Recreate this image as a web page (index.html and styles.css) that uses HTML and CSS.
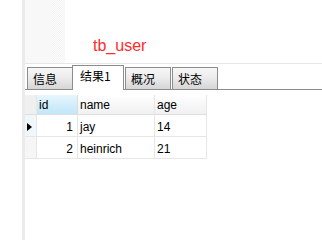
FILE: index.html
```html
<!DOCTYPE html>
<html>
<head>
<meta charset="utf-8">
<link rel="stylesheet" href="styles.css">
</head>
<body>
<div class="page">
  <div class="gutter"></div>
  <div class="strip"></div>
  <div class="main">
    <div class="top">
      <div class="pane1"></div>
      <div class="pane2"></div>
      <div class="title">tb_user</div>
    </div>
    <div class="sep"></div>
    <div class="tabbar">
      <div class="tab w1">信息</div>
      <div class="tab active">结果1</div>
      <div class="tab w3">概况</div>
      <div class="tab w4">状态</div>
    </div>
    <div class="content">
      <div class="grid">
        <div class="cell rh hdr-rh"></div>
        <div class="cell hdr sel">id</div>
        <div class="cell hdr">name</div>
        <div class="cell hdr">age</div>

        <div class="cell rh cur"><span class="arrow"></span></div>
        <div class="cell num">1</div>
        <div class="cell">jay</div>
        <div class="cell">14</div>

        <div class="cell rh"></div>
        <div class="cell num">2</div>
        <div class="cell">heinrich</div>
        <div class="cell">21</div>
      </div>
    </div>
  </div>
</div>
</body>
</html>
```
FILE: styles.css
```css
html, body {
  margin: 0;
  padding: 0;
  background: #fff;
  height: 100%;
}
body {
  font-family: "Liberation Sans", "Noto Sans CJK SC", sans-serif;
  font-size: 12px;
  color: #000;
}
.page {
  display: flex;
  min-height: 100vh;
  height: 100%;
  overflow: hidden;
}
.gutter {
  width: 22px;
  flex: none;
}
.strip {
  width: 3px;
  flex: none;
  background: #ebebeb;
}
.main {
  flex: 1;
  display: flex;
  flex-direction: column;
}
.top {
  height: 63px;
  display: flex;
}
.pane1 {
  width: 27px;
  background: #f8f8f8;
}
.pane2 {
  width: 13px;
  background: repeating-conic-gradient(#f3f3f3 0 25%, #fdfdfd 0 50%) 0 0 / 2px 2px;
}
.title {
  padding-left: 28px;
  padding-top: 37px;
  font-size: 16px;
  line-height: 18px;
  color: #ff2b2b;
}
.sep {
  height: 1px;
  background: #e6e6e6;
}
.tabbar {
  height: 25px;
  border-bottom: 1px solid #8c8c8c;
  display: flex;
  align-items: flex-end;
  padding-left: 2px;
}
.tab {
  box-sizing: border-box;
  height: 22px;
  border: 1px solid #8c8c8c;
  border-bottom: none;
  background: linear-gradient(#f7f7f7, #ececec 45%, #d6d6d6);
  font-family: "Noto Sans CJK SC", sans-serif;
  font-size: 12px;
  line-height: 21px;
  padding-left: 5px;
  color: #000;
}
.w1 { width: 46px; }
.w3 { width: 46px; margin-left: 1px; }
.w4 { width: 46px; margin-left: 1px; }
.tab.active {
  width: 52px;
  height: 25px;
  margin-bottom: -1px;
  margin-left: -1px;
  background: #fff;
  line-height: 20px;
  padding-left: 7px;
}
.content {
  padding-top: 5px;
}
.grid {
  display: grid;
  grid-template-columns: 12px 41px 77px 52px;
  grid-template-rows: 20px 22px 22px;
}
.cell {
  box-sizing: border-box;
  border-right: 1px solid #e6e6e6;
  border-bottom: 1px solid #e6e6e6;
  padding: 4px 0 0 2px;
  line-height: 16px;
  white-space: nowrap;
}
.hdr {
  padding-top: 2px;
  background: linear-gradient(#ffffff, #f7f7f7 50%, #f1f1f1);
  border-bottom-color: #dedede;
}
.hdr.sel {
  background: linear-gradient(#e9f6fd, #d3eefb 50%, #c1e7f9);
  border-right-color: #dcdcdc;
}
.rh {
  padding: 0;
  background: #f6f6f6;
}
.hdr-rh {
  background: #f0f0f0;
  border-bottom-color: #dedede;
}
.rh.cur {
  background: #f0f7fb;
  padding: 8px 0 0 2px;
}
.arrow {
  display: block;
  width: 0;
  height: 0;
  border-left: 5px solid #000;
  border-top: 4px solid transparent;
  border-bottom: 4px solid transparent;
}
.num {
  text-align: right;
  padding-right: 4px;
}
```
